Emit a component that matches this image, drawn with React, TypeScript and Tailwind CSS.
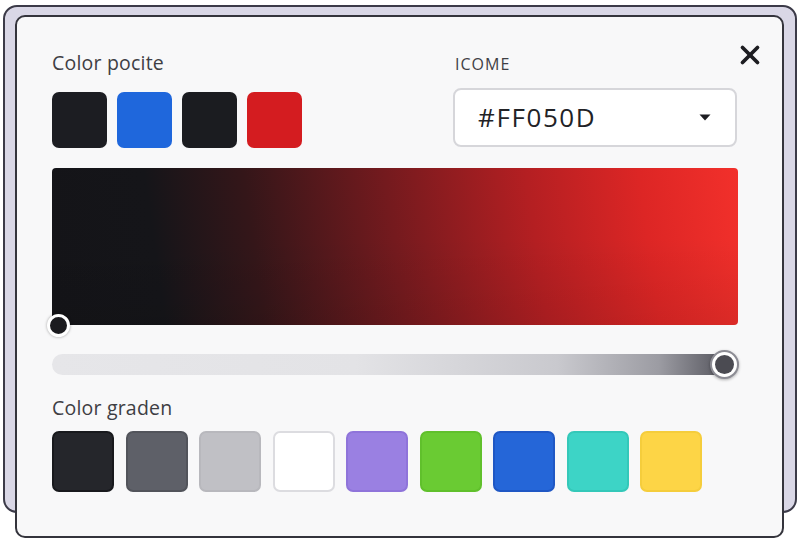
import { X } from "lucide-react";

const paletteSwatches = ["#1c1d22", "#1f67dc", "#1b1c20", "#d41c20"];

const gradientSwatches = [
  { color: "#25262b", border: "#18191d" },
  { color: "#5e6068", border: "#52545b" },
  { color: "#c0c0c5", border: "#b8b8bd" },
  { color: "#ffffff", border: "#dcdce0" },
  { color: "#9a80e2", border: "#8f74da" },
  { color: "#6acb33", border: "#60c02c" },
  { color: "#2566d8", border: "#1f57c4" },
  { color: "#3dd4c6", border: "#34c8b9" },
  { color: "#fdd546", border: "#f5cd3c" },
];

function Swatch({ color, border, className }: { color: string; border: string; className: string }) {
  return (
    <div
      className={`rounded-[7px] border-2 ${className}`}
      style={{ backgroundColor: color, borderColor: border }}
    />
  );
}

export default function App(): JSX.Element {
  return (
    <div className="h-[546px] w-[800px] overflow-hidden bg-white font-['Open_Sans',sans-serif]">
      <div className="ml-[3px] mt-[5px] h-[508px] w-[794px] rounded-[14px] border-2 border-[#3b3a48] bg-[#d9d7e6] pt-[8px] pl-[10px]">
        <div className="relative h-[523px] w-[769px] rounded-[10px] border-2 border-[#34343c] bg-[#f8f8f9] px-[35px] pt-[34px]">
          <button type="button" className="absolute right-[17px] top-[23px] text-[#1d1d22]">
            <X size={30} strokeWidth={3} />
          </button>

          <div className="flex justify-between">
            <div>
              <div className="text-[19.5px] font-medium leading-[24px] tracking-[0.2px] text-[#3e3e44]">
                Color pocite
              </div>
              <div className="mt-[17px] flex gap-[10px]">
                {paletteSwatches.map((color, i) => (
                  <div
                    key={i}
                    className="h-[56px] w-[55px] rounded-[7px]"
                    style={{ backgroundColor: color }}
                  />
                ))}
              </div>
            </div>
            <div className="mr-[10px] w-[284px]">
              <div className="pl-[2px] pt-[2px] text-[16px] font-medium leading-[22px] tracking-[1px] text-[#3f3f45]">
                ICOME
              </div>
              <div className="mt-[13px] flex h-[59px] items-center justify-between rounded-[8px] border-2 border-[#d6d6da] bg-white pl-[23px] pr-[24px]">
                <span className="text-[26px] tracking-[1.6px] text-[#222226]">#FF050D</span>
                <svg width="12" height="7" viewBox="0 0 12 7">
                  <path d="M0.5 0.5 H11.5 L6 6.5 Z" fill="#1d1d22" />
                </svg>
              </div>
            </div>
          </div>

          <div className="relative mt-[20px] h-[157px] w-[686px] rounded-[4px] bg-[linear-gradient(82deg,#141418_0%,#151519_16%,#341619_30%,#741a1e_50%,#b41f22_70%,#dd2625_86%,#f2302b_100%)]">
            <div className="absolute inset-0 rounded-[4px] bg-[linear-gradient(180deg,rgba(0,0,0,0)_0%,rgba(0,0,0,0)_45%,rgba(0,0,0,0.08)_100%)]" />
            <div className="absolute -bottom-[12px] -left-[5px] flex h-[23px] w-[23px] items-center justify-center rounded-full border-[3px] border-white bg-[#1b1b1f] shadow-[0_0_3px_rgba(0,0,0,0.35)]" />
          </div>

          <div className="relative mt-[29px] h-[21px] w-[674px] rounded-full bg-[linear-gradient(90deg,#e6e6e9_0%,#e3e3e6_45%,#c9c9ce_75%,#9c9ca3_90%,#55555d_100%)]">
            <div className="absolute -right-[13px] -top-[4px] flex h-[29px] w-[29px] items-center justify-center rounded-full border-2 border-[#8c8c94] bg-white shadow-[0_1px_3px_rgba(0,0,0,0.3)]">
              <div className="h-[19px] w-[19px] rounded-full bg-[#4b4b52]" />
            </div>
          </div>

          <div className="mt-[21px] text-[19.5px] font-medium leading-[24px] tracking-[0.2px] text-[#3e3e44]">
            Color graden
          </div>
          <div className="mt-[11px] flex gap-[11.5px]">
            {gradientSwatches.map((s, i) => (
              <Swatch key={i} color={s.color} border={s.border} className="h-[61px] w-[62px]" />
            ))}
          </div>
        </div>
      </div>
    </div>
  );
}
